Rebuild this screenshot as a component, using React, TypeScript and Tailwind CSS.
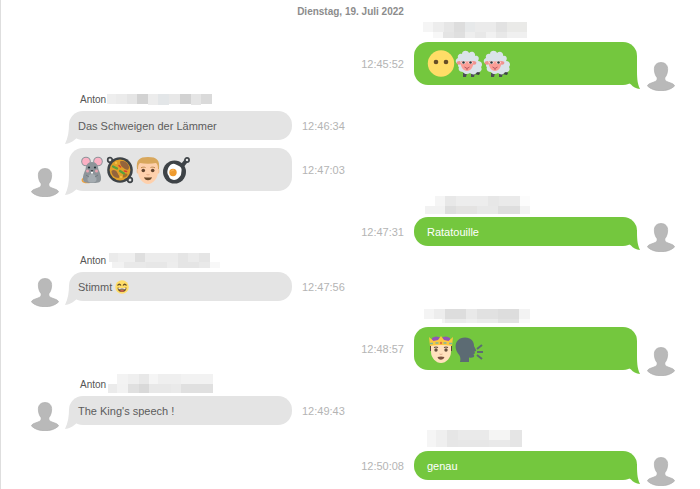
import React from "react";

type Cell = [x: number, y: number, w: number, h: number, fill: string];

function Mouse() {
  return (
    <svg viewBox="0 0 28 28" className="size-7" role="img" aria-label="Maus">
      <path d="M9 22c-5-1-6 3-3 4 2 .8 5 .5 7 0" fill="none" stroke="#efa23c" strokeWidth="1.500" />
      <circle cx="8" cy="5.500" r="4.800" fill="#8d9499" />
      <circle cx="20" cy="5.500" r="4.800" fill="#8d9499" />
      <circle cx="8" cy="5.500" r="3.800" fill="#fbb1c4" />
      <circle cx="20" cy="5.500" r="3.800" fill="#fbb1c4" />
      <path d="M14 6c5 0 6 4 6.500 7.500C22 17 23.500 20 23 23.500 22.500 27 19 27 14 27S5.500 27 5 23.500C4.500 20 6 17 7.500 13.500 8 10 9 6 14 6Z" fill="#8d9499" />
      <path d="M14 18c3 0 4.500 3 4.500 5.500S16.500 26.500 14 26.500s-4.500-.5-4.500-3S11 18 14 18Z" fill="#a5acb1" />
      <circle cx="11" cy="11.500" r="1.100" fill="#25333a" />
      <circle cx="17" cy="11.500" r="1.100" fill="#25333a" />
      <circle cx="9.500" cy="15" r="1.500" fill="#e9a3b0" />
      <circle cx="18.500" cy="15" r="1.500" fill="#e9a3b0" />
      <path d="M12.500 14h3L14 15.600Z" fill="#3e4347" />
      <path d="M13 16h2v1.500h-2Z" fill="#fff" />
      <path d="M8 19l3 2M20 19l-3 2" stroke="#727a80" strokeWidth="1" />
    </svg>
  );
}

function Paella() {
  return (
    <svg viewBox="0 0 28 28" className="size-7" role="img" aria-label="Pfannengericht">
      <circle cx="4" cy="4" r="2.300" fill="none" stroke="#3e4347" strokeWidth="1.700" />
      <circle cx="24" cy="24" r="2.300" fill="none" stroke="#3e4347" strokeWidth="1.700" />
      <circle cx="14" cy="14" r="12.800" fill="#3e4347" />
      <circle cx="14" cy="14" r="10.400" fill="#e0a02a" />
      <path d="M14 5.500c4-1.500 8 1.500 9 5.500 0 3-2 3.500-4 2s-5-3-5-7.500Z" fill="#94643c" />
      <path d="M5.500 15c2-2 5-.5 6 2s3 3.500 1 5c-4 0-7-3-7-7Z" fill="#94643c" />
      <path d="M17 19c1.500-1.500 4-2 4.500-.5 0 1.500-2.500 3.500-4.500 3Z" fill="#a4712e" />
      <path d="M7 10.500l4 2M14 15l4 2.500" stroke="#5aa13c" strokeWidth="2.200" strokeLinecap="round" />
      <path d="M13 9.500l1.500 1.500M18.500 15l2 .5" stroke="#dc3f34" strokeWidth="1.600" strokeLinecap="round" />
      <circle cx="10" cy="7" r="1.200" fill="#f0c046" />
      <circle cx="15" cy="21" r="1.200" fill="#f0c046" />
    </svg>
  );
}

function Man() {
  return (
    <svg viewBox="0 0 28 28" className="size-7" role="img" aria-label="Mann">
      <ellipse cx="4" cy="15" rx="1.500" ry="2.800" fill="#f6c59b" />
      <ellipse cx="24" cy="15" rx="1.500" ry="2.800" fill="#f6c59b" />
      <path d="M4 8C4 3 8 2 14 2s10 1 10 6v8c0 6-5 12-10 12S4 22 4 16Z" fill="#fed0ac" />
      <path d="M3 13C2 4 5 1 14 1s12 3 11 12h-1c0-3-.5-5-2-6-5 1-11 1-16 0-1.500 1-2 3-2 6Z" fill="#d8a75c" />
      <path d="M7 11.800c1.500-.8 3-.8 4.500-.3M16.500 11.500c1.500-.5 3-.5 4.500.3" fill="none" stroke="#c08a52" strokeWidth="1" />
      <circle cx="9.300" cy="14.500" r="1.800" fill="#61432e" />
      <circle cx="18.700" cy="14.500" r="1.800" fill="#61432e" />
      <path d="M12.500 18.500q1.500.8 3 0" fill="none" stroke="#e5ab84" strokeWidth="1" />
      <path d="M10 21.200q4 .8 8 0-.8 3-4 3t-4-3Z" fill="#6b4a2c" />
    </svg>
  );
}

function FryingPan() {
  return (
    <svg viewBox="0 0 28 28" className="size-7" role="img" aria-label="Spiegelei in der Pfanne">
      <path d="M20 10l4-5" stroke="#3e4347" strokeWidth="4" />
      <circle cx="25" cy="4" r="2.100" fill="none" stroke="#3e4347" strokeWidth="1.700" />
      <circle cx="12.500" cy="16" r="11.500" fill="#3e4347" />
      <path d="M9 8.500c3-2 5 0 7 1 3 1 4 3 3.500 5.500-.5 3 0 4-2 6-2 2.500-5 3.500-7.500 2.500s-2.500-2-3.500-4c-2.500-3-.5-9 2.500-11Z" fill="#fff" />
      <circle cx="11" cy="16.500" r="3.700" fill="#ef9b2f" />
      <path d="M9 15.500q1-2 3-1.500" fill="none" stroke="#ffc470" strokeWidth=".8" />
    </svg>
  );
}

function NoMouth() {
  return (
    <svg viewBox="0 0 28 28" className="size-7" role="img" aria-label="Gesicht ohne Mund">
      <circle cx="14" cy="13.500" r="13.200" fill="#ffdd67" />
      <circle cx="9" cy="12" r="2.300" fill="#664e27" />
      <circle cx="19" cy="12" r="2.300" fill="#664e27" />
    </svg>
  );
}

function Sheep() {
  return (
    <svg viewBox="0 0 28 28" className="size-7" role="img" aria-label="Schaf">
      <path d="M18 21l4-1 3 3-1 2-5-1Z" fill="#3e4347" />
      <path d="M8 23h4l-1 4H8ZM16 23h4l-1 4h-3Z" fill="#4b4d56" />
      <path d="M3 14c-3-1-3-5 0-6-1-3 2-5 4-4 0-4 6-4 7-1 3-3 7 0 6 3 3-1 5 2 3 5 4 0 5 4 3 6 2 3-1 6-4 5-1 3-5 3-7 1-3 2-6 1-7-1-4 0-5-3-4-5-1 0-1-1-1-3Z" fill="#dae3ea" />
      <path d="M5 11c-3 0-4 1-3 3 1 1 3 1 4 0ZM18 11c3 0 4 1 3 3-1 1-3 1-4 0Z" fill="#ef928f" />
      <path d="M5.500 12c1-3 12-3 13 0 0 5-3 9-6.500 9s-6.500-4-6.500-9Z" fill="#fa9e97" />
      <path d="M5 10q7 3 14 0V8H5Z" fill="#dae3ea" />
      <ellipse cx="8.500" cy="12.500" rx="2" ry="1.500" fill="#fff" />
      <ellipse cx="15.500" cy="12.500" rx="2" ry="1.500" fill="#fff" />
      <circle cx="8.500" cy="12.500" r="1.300" fill="#30343a" />
      <circle cx="15.500" cy="12.500" r="1.300" fill="#30343a" />
      <path d="M9.500 17l2.500 1.500 2.500-1.500M12 18.500V20" fill="none" stroke="#ba5960" strokeWidth="1" />
    </svg>
  );
}

function King() {
  return (
    <svg viewBox="0 0 28 28" className="size-7" role="img" aria-label="König">
      <path d="M3 10h22v6H3Z" fill="#594539" />
      <path d="M4 10h20v7c0 6-5 11-10 11S4 23 4 17Z" fill="#ffe1bd" />
      <path d="M5 3q4-3 9 0 5-3 9 0v5H5Z" fill="#9155b7" />
      <path d="M2 2l4.500 4L11 5l3-4 3 4 4.500 1L26 2l-1 9q-11-2-22 0Z" fill="#fcc73f" />
      <path d="M3 8.500h3M8.500 8h3M16.500 8h3M22 8.500h3" stroke="#7cb7a0" strokeWidth="1.500" />
      <circle cx="14" cy="8" r="1.200" fill="#e0704a" />
      <path d="M7 12.500q2-1 4 0M17 12.500q2-1 4 0" fill="none" stroke="#594539" strokeWidth="1.200" />
      <circle cx="9" cy="15" r="1.700" fill="#664e3b" />
      <circle cx="19" cy="15" r="1.700" fill="#664e3b" />
      <path d="M12.500 19q1.500 1 3 0" fill="none" stroke="#e0b08c" strokeWidth="1" />
      <path d="M10.500 22q3.500-.8 7 0-.8 2.800-3.500 2.800t-3.500-2.800Z" fill="#79513d" />
    </svg>
  );
}

function Speaking() {
  return (
    <svg viewBox="0 0 28 28" className="size-7" role="img" aria-label="Sprechender Kopf">
      <path d="M10 2.500c6 0 9 4 9 8.500l2 4c.4 1-.5 1.200-1.500 1.300l.5 2-1.500 1 .7 1.200c.2 2-2.200 2.500-5.200 2V27H5c1-4 0-6.500-2-8.500C-2 11.500 1 2.500 10 2.500Z" fill="#5c6b73" />
      <path d="M22 14l5-4M22 17h6M22 20l5 4" stroke="#5c6b73" strokeWidth="2" />
    </svg>
  );
}

function Smile() {
  return (
    <svg viewBox="0 0 28 28" className="size-[14px]" role="img" aria-label="Lachendes Gesicht">
      <circle cx="14" cy="14" r="13.500" fill="#ffdd67" />
      <path d="M5 11q3.500-5 7 0M16 11q3.500-5 7 0" fill="none" stroke="#664e27" strokeWidth="2.600" />
      <path d="M5 15q9 2 18 0c0 6-4 9-9 9s-9-3-9-9Z" fill="#664e27" />
      <path d="M7 16q7 1.500 14 0v2.500H7Z" fill="#fff" />
      <path d="M9 22q5-4 10 0-5 3-10 0Z" fill="#d86155" />
    </svg>
  );
}

function Avatar() {
  return (
    <svg viewBox="0 0 28 29" className="-mb-[6px] h-[29px] w-7 shrink-0" role="img" aria-label="Profilbild">
      <path
        d="M14 .5c4.500 0 7 3 6.600 7.500-.2 3-1 5.500-2.600 7.500-.8 2 .2 3.500 3 4.500l4 1.500c1.500.6 2.300 1.500 2.500 2.500C24 27.500 19 28.700 14 28.700S4 27.500.5 24c.2-1 1-1.900 2.500-2.500L7 20c2.800-1 3.800-2.500 3-4.500C8.400 13.500 7.600 11 7.400 8 7 3.500 9.500.5 14 .5Z"
        fill="#b9b9b9"
        stroke="#adadad"
        strokeWidth=".7"
      />
    </svg>
  );
}

function Mosaic({ cells }: { cells: Cell[] }) {
  return (
    <svg width="107" height="18" className="shrink-0 overflow-visible" shapeRendering="crispEdges" aria-hidden="true">
      {cells.map(([x, y, w, h, fill], i) => (
        <rect key={i} x={x} y={y} width={w} height={h} fill={fill} />
      ))}
    </svg>
  );
}

interface Message {
  own?: boolean;
  time: string;
  name?: Cell[];
  avatar?: boolean;
  large?: boolean;
  content: React.ReactNode;
}

const messages: Message[] = [
  {
    own: true, time: "12:45:52", avatar: true, large: true,
    name: [
      [0, -2, 10, 10, "#f5f5f5"], [10, -2, 11, 10, "#ededed"], [21, -2, 10, 10, "#e6e6e6"], [31, -2, 11, 10, "#dddddd"],
      [42, -2, 10, 10, "#e7e9ea"], [52, -2, 21, 10, "#ebebeb"], [73, -2, 11, 10, "#e2e2e2"], [84, -2, 20, 10, "#eaeae8"],
      [10, 8, 10, 6, "#f7f7f7"], [20, 8, 11, 6, "#e4e4e4"], [31, 8, 11, 6, "#dfdfdf"], [42, 8, 10, 6, "#eeeeee"],
      [52, 8, 11, 6, "#e8e8e8"], [63, 8, 10, 6, "#f1f1f1"], [73, 8, 11, 6, "#e8e8e8"], [84, 8, 20, 6, "#f0f0f0"],
    ],
    content: <><NoMouth /><Sheep /><Sheep /></>,
  },
  {
    time: "12:46:34",
    name: [
      [0, 1, 9, 10, "#eeeeee"], [9, 1, 11, 10, "#ebebeb"], [20, 1, 10, 10, "#e5e5e5"], [30, 1, 11, 10, "#d2d2d2"],
      [41, 1, 10, 11, "#ececec"], [51, 1, 11, 11, "#e3e6e8"], [62, 1, 11, 10, "#e8e8e8"], [73, 1, 11, 10, "#d2d2d2"],
      [84, 1, 10, 11, "#e5e5e5"], [94, 1, 11, 10, "#dadada"],
    ],
    content: "Das Schweigen der Lämmer",
  },
  { time: "12:47:03", avatar: true, large: true, content: <><Mouse /><Paella /><Man /><FryingPan /></> },
  {
    own: true, time: "12:47:31", avatar: true,
    name: [
      [12, -3, 10, 10, "#f5f5f5"], [22, -3, 11, 10, "#e8e8e8"], [33, -3, 32, 10, "#ededed"], [65, -3, 11, 10, "#e7e7e7"],
      [76, -3, 21, 10, "#eaeaea"], [97, -3, 10, 10, "#fcfcfc"],
      [2, 7, 20, 8, "#f2f2f2"], [22, 7, 11, 8, "#dedede"], [33, 7, 21, 8, "#e4e3e2"], [54, 7, 21, 8, "#e8e8e8"],
      [75, 7, 22, 8, "#dedede"], [97, 7, 10, 8, "#f3f3f3"],
    ],
    content: "Ratatouille",
  },
  {
    time: "12:47:56", avatar: true,
    name: [
      [2, -1, 9, 9, "#ebebeb"], [11, -1, 17, 9, "#efefef"], [28, -1, 10, 9, "#dfdfdf"], [38, -1, 33, 9, "#ececec"],
      [71, -1, 10, 9, "#e5e5e5"], [81, -1, 11, 9, "#ebebeb"], [92, -1, 11, 9, "#e5e5e5"],
      [5, 8, 12, 6, "#f2f2f2"], [17, 8, 22, 6, "#e9e9e9"], [39, 8, 21, 6, "#e7e7e7"], [60, 8, 11, 6, "#ededed"],
      [71, 8, 21, 6, "#e5e5e5"], [92, 8, 11, 6, "#e9e9e9"], [103, 8, 10, 6, "#f8f8f8"],
    ],
    content: <>Stimmt&nbsp;<Smile /></>,
  },
  {
    own: true, time: "12:48:57", avatar: true, large: true,
    name: [
      [1, 0, 10, 10, "#f4f4f4"], [11, 0, 11, 10, "#ededed"], [22, 0, 21, 10, "#dddddd"], [43, 0, 11, 10, "#e9e9e9"],
      [54, 0, 21, 10, "#e1e1e1"], [75, 0, 21, 10, "#dddddd"], [96, 0, 11, 10, "#f3f3f3"],
      [19, 10, 3, 4, "#f4f4f4"], [22, 10, 21, 4, "#ebebeb"], [43, 10, 11, 4, "#efefef"], [54, 10, 21, 4, "#ebebeb"],
      [75, 10, 21, 4, "#e2e2e2"], [96, 10, 11, 4, "#fafafa"],
    ],
    content: <><King /><Speaking /></>,
  },
  {
    time: "12:49:43", avatar: true,
    name: [
      [10, -4, 11, 10, "#f3f3f3"], [21, -4, 11, 10, "#efefef"], [32, -4, 10, 10, "#e8e8e8"], [42, -4, 9, 10, "#f5f5f5"],
      [51, -4, 23, 10, "#efefef"], [74, -4, 32, 10, "#f2f2f2"],
      [1, 6, 9, 9, "#ebebeb"], [10, 6, 11, 9, "#f2f2f2"], [21, 6, 11, 9, "#e0e0e0"], [32, 6, 10, 9, "#d9d9d9"],
      [42, 6, 22, 9, "#e8e8e8"], [64, 6, 10, 9, "#eaeaea"], [74, 6, 32, 9, "#e0e0e0"],
    ],
    content: "The King's speech !",
  },
  {
    own: true, time: "12:50:08", avatar: true,
    name: [
      [4, -3, 9, 17, "#f5f5f5"], [13, -3, 11, 17, "#efefef"], [24, -3, 11, 17, "#e6e6e6"], [35, -3, 31, 10, "#eaeaea"],
      [66, -3, 21, 10, "#f5f5f4"], [87, -3, 12, 17, "#e5e5e5"], [35, 7, 31, 7, "#e7e7e7"], [66, 7, 21, 7, "#e9e9e9"],
    ],
    content: "genau",
  },
];

function Bubble({ own, large, children }: { own?: boolean; large?: boolean; children: React.ReactNode }) {
  return (
    <div
      className={`relative flex w-[223px] items-center rounded-[14px] text-[11px] leading-4 ${large ? "h-[43px]" : "h-[29px]"} ${
        own ? "bg-[#74c73e] pl-[13px] text-white" : "bg-[#e4e4e4] pl-[9px] text-[#5c5c5c]"
      }`}
    >
      {own ? (
        <svg viewBox="0 0 14 20" className="absolute -right-[3px] -bottom-1 h-5 w-[14px]" aria-hidden="true">
          <path d="M11 0c0 7 0 14 3 20-4-.5-7-2-9-4.500L0 12V0Z" fill="#74c73e" />
        </svg>
      ) : (
        <svg viewBox="0 0 14 20" className="absolute -bottom-1 -left-1 h-5 w-[14px]" aria-hidden="true">
          <path d="M4 0c0 7-1 14-4 20 4-.5 7-2 10-4.500L14 12V0Z" fill="#e4e4e4" />
        </svg>
      )}
      <div className="relative flex items-center">{children}</div>
    </div>
  );
}

function Row({ message }: { message: Message }) {
  const { own, time, name, avatar, large, content } = message;
  return (
    <li>
      {name && (
        <div className={`flex h-[18px] ${own ? "justify-end pr-[63px]" : "pl-[79px]"}`}>
          {own ? (
            <div className="w-[223px] pl-[9px]">
              <Mosaic cells={name} />
            </div>
          ) : (
            <>
              <span className="w-[27px] text-[10px] leading-[14px] text-[#555555]">Anton</span>
              <Mosaic cells={name} />
            </>
          )}
        </div>
      )}
      <div className={`flex items-end gap-[10px] ${own ? "flex-row-reverse pr-[25px]" : "pl-[30px]"}`}>
        {avatar ? <Avatar /> : <span className="w-7" />}
        <Bubble own={own} large={large}>{content}</Bubble>
        <time className="self-center text-[11px] leading-4 text-[#b4b4b4]">{time}</time>
      </div>
    </li>
  );
}

export default function App() {
  return (
    <main className="min-h-screen border-l border-[#dedede] bg-white pb-[9px] font-['Liberation_Sans',Arial,sans-serif]">
      <h1 className="h-6 text-center text-[10px] leading-6 font-bold text-[#8c8c8c]">Dienstag, 19. Juli 2022</h1>
      <ol className="flex flex-col gap-2">
        {messages.map((message) => (
          <Row key={message.time} message={message} />
        ))}
      </ol>
    </main>
  );
}
